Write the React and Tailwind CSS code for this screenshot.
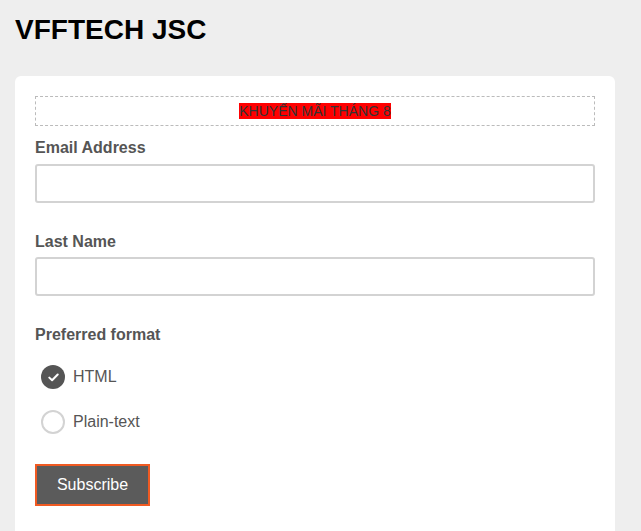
export default function App() {
  const font = { fontFamily: '"Liberation Sans", Arial, sans-serif' };
  return (
    <div className="min-h-[531px] bg-[#eeeeee] px-[15px] pt-[14px] pb-[20px]" style={font}>
      <h1 className="text-[28px] leading-[32px] font-bold text-black m-0">VFFTECH JSC</h1>
      <div className="mt-[30px] w-[600px] bg-white rounded-[6px] px-[20px] pt-[20px] pb-[40px]">
        <div className="h-[30px] border border-dashed border-[#bbbbbb] flex items-center justify-center">
          <span className="bg-[#ff0000] text-[#333333] text-[14px] leading-[16px]">KHUYẾN MÃI THÁNG 8</span>
        </div>
        <label className="block mt-[13px] text-[16px] leading-[18px] font-bold text-[#555555]">Email Address</label>
        <input className="block mt-[7px] w-full h-[39px] border-2 border-[#d3d3d3] rounded-[3px] bg-white outline-none" />
        <label className="block mt-[30px] text-[16px] leading-[18px] font-bold text-[#555555]">Last Name</label>
        <input className="block mt-[6px] w-full h-[39px] border-2 border-[#d3d3d3] rounded-[3px] bg-white outline-none" />
        <div className="mt-[30px] text-[16px] leading-[18px] font-bold text-[#555555]">Preferred format</div>
        <div className="mt-[21px] flex flex-col gap-[21px] pl-[6px]">
          <div className="flex items-center gap-[8px] h-[24px]">
            <span className="w-[24px] h-[24px] rounded-full bg-[#555555] flex items-center justify-center">
              <svg width="11" height="9" viewBox="0 0 11 9" fill="none">
                <path d="M1.3 4.6 L4.1 7.3 L9.7 1.5" stroke="white" strokeWidth="2" strokeLinecap="round" strokeLinejoin="round" />
              </svg>
            </span>
            <span className="text-[16px] text-[#555555]">HTML</span>
          </div>
          <div className="flex items-center gap-[8px] h-[24px]">
            <span className="w-[24px] h-[24px] rounded-full border-2 border-[#d3d3d3] bg-white"></span>
            <span className="text-[16px] text-[#555555]">Plain-text</span>
          </div>
        </div>
        <button className="mt-[30px] w-[115px] h-[42px] bg-[#5b5b5b] border-2 border-[#f05a22] text-white text-[16px] flex items-center justify-center">Subscribe</button>
      </div>
    </div>
  );
}
